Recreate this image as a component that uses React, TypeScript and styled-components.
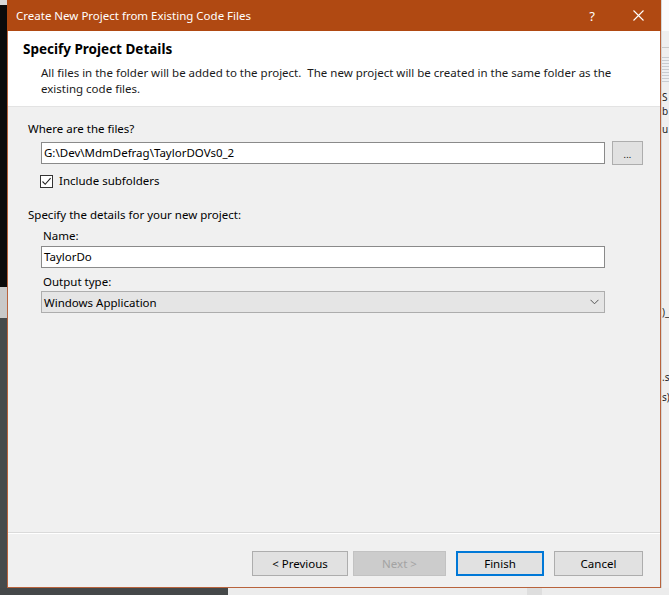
import React from "react";
import styled, { createGlobalStyle } from "styled-components";

const Global = createGlobalStyle`
  html, body { margin: 0; padding: 0; }
  body {
    width: 669px;
    height: 595px;
    overflow: hidden;
    background: #ececec;
    font-family: "Noto Sans", "Open Sans", sans-serif;
    font-size: 11.5px;
    color: #000;
  }
  * { box-sizing: border-box; }
`;

const Screen = styled.div`
  display: grid;
  grid-template-columns: 7px 654px 8px;
  grid-template-rows: 588px 7px;
  width: 669px;
  height: 595px;
  overflow: hidden;
`;

const Strip = styled.div`
  display: flex;
  flex-direction: column;
  overflow: hidden;
`;

const Band = styled.div<{ $h?: number; $bg: string }>`
  flex: ${(p) => (p.$h ? `0 0 ${p.$h}px` : "1 1 auto")};
  background: ${(p) => p.$bg};
`;

const RightStrip = styled.div`
  display: flex;
  flex-direction: column;
  overflow: hidden;
  background: #efefef;
  border-left: 1px solid #d6d6d6;
`;

const RightTop = styled.div`
  flex: 0 0 31px;
  background: #fbfbfb;
`;

const RightRule = styled.div<{ $mt: number }>`
  flex: 0 0 1px;
  margin-top: ${(p) => p.$mt}px;
  background: #c8c8c8;
`;

const RightDots = styled.div<{ $mt: number }>`
  flex: 0 0 25px;
  margin-top: ${(p) => p.$mt}px;
  background: repeating-linear-gradient(
    to bottom,
    #c9ccd0 0px,
    #c9ccd0 1px,
    #eef0f2 1px,
    #eef0f2 3px
  );
`;

const Frag = styled.div<{ $mt: number }>`
  flex: 0 0 12px;
  margin-top: ${(p) => p.$mt}px;
  height: 12px;
  line-height: 12px;
  font-size: 10px;
  color: #1e1e1e;
  white-space: nowrap;
  overflow: hidden;
`;

const BottomStrip = styled.div`
  grid-column: 1 / -1;
  display: flex;
`;

const BottomPart = styled.div<{ $w?: number; $bg: string }>`
  flex: ${(p) => (p.$w ? `0 0 ${p.$w}px` : "1 1 auto")};
  background: ${(p) => p.$bg};
`;

const Dialog = styled.div`
  display: flex;
  flex-direction: column;
  background: #f0f0f0;
  border-left: 1px solid #b8633c;
  border-right: 1px solid #b8633c;
  border-bottom: 1px solid #b8633c;
`;

const TitleBar = styled.div`
  flex: 0 0 31px;
  margin: 0 -1px;
  display: flex;
  align-items: center;
  background: #b04912;
  color: #ffffff;
`;

const TitleText = styled.div`
  flex: 1 1 auto;
  padding-left: 9px;
  font-size: 11.5px;
  padding-bottom: 1px;
`;

const CaptionButton = styled.div`
  flex: 0 0 46px;
  height: 31px;
  display: flex;
  align-items: center;
  justify-content: center;
  color: #ffffff;
  font-size: 13px;
`;

const Header = styled.div`
  flex: 0 0 76px;
  background: #ffffff;
  border-bottom: 1px solid #e3e3e3;
  padding: 9px 0 0 15px;
`;

const HeaderTitle = styled.div`
  font-weight: 700;
  font-size: 13.5px;
  line-height: 18px;
  color: #000;
`;

const HeaderDesc = styled.div`
  margin-top: 7px;
  padding-left: 18px;
  font-size: 11.5px;
  line-height: 16px;
  color: #1a1a1a;
  white-space: pre;
`;

const Body = styled.div`
  flex: 1 1 auto;
  display: flex;
  flex-direction: column;
  padding: 0 17px 0 20px;
`;

const Label = styled.div<{ $indent?: number; $mt: number }>`
  flex: none;
  margin-top: ${(p) => p.$mt}px;
  padding-left: ${(p) => p.$indent ?? 0}px;
  height: 16px;
  line-height: 16px;
  font-size: 11.5px;
  color: #000;
  white-space: nowrap;
`;

const Row = styled.div<{ $mt: number }>`
  flex: none;
  margin-top: ${(p) => p.$mt}px;
  display: flex;
  align-items: center;
  padding-left: 13px;
  gap: 7px;
`;

const TextBox = styled.div`
  flex: 0 0 564px;
  height: 22px;
  background: #ffffff;
  border: 1px solid #8a8a8a;
  padding-left: 2px;
  line-height: 20px;
  font-size: 11.5px;
  color: #000;
  white-space: nowrap;
`;

const Field = styled.div<{ $mt: number }>`
  flex: none;
  margin-top: ${(p) => p.$mt}px;
  margin-left: 13px;
  width: 564px;
  height: 22px;
  background: #ffffff;
  border: 1px solid #8a8a8a;
  padding-left: 2px;
  line-height: 20px;
  font-size: 11.5px;
  color: #000;
  white-space: nowrap;
`;

const Combo = styled.div<{ $mt: number }>`
  flex: none;
  margin-top: ${(p) => p.$mt}px;
  margin-left: 13px;
  width: 564px;
  height: 22px;
  display: flex;
  align-items: center;
  justify-content: space-between;
  background: #e5e5e5;
  border: 1px solid #adadad;
  padding: 0 5px 0 2px;
  font-size: 11.5px;
  color: #000;
`;

const BrowseButton = styled.div`
  flex: 0 0 31px;
  height: 24px;
  display: flex;
  align-items: center;
  justify-content: center;
  padding-top: 3px;
  background: #e1e1e1;
  border: 1px solid #adadad;
  font-size: 9px;
  letter-spacing: 0.3px;
  color: #000;
`;

const CheckRow = styled.div<{ $mt: number }>`
  flex: none;
  margin-top: ${(p) => p.$mt}px;
  display: flex;
  align-items: center;
  padding-left: 12px;
  gap: 6px;
  height: 16px;
`;

const CheckBox = styled.div`
  width: 13px;
  height: 13px;
  border: 1px solid #333333;
  background: #ffffff;
  display: flex;
  align-items: center;
  justify-content: center;
`;

const CheckLabel = styled.span`
  font-size: 11.5px;
  line-height: 16px;
`;

const Footer = styled.div`
  flex: 0 0 55px;
  display: flex;
  justify-content: flex-end;
  align-items: flex-start;
  padding: 18px 17px 0 0;
  border-top: 1px solid #dadada;
  box-shadow: inset 0 1px 0 #ffffff;
`;

const Button = styled.div<{ $w: number; $ml: number; $variant?: "default" | "disabled" | "focus" }>`
  flex: 0 0 ${(p) => p.$w}px;
  margin-left: ${(p) => p.$ml}px;
  height: 25px;
  display: flex;
  align-items: center;
  justify-content: center;
  font-size: 11.5px;
  background: ${(p) => (p.$variant === "disabled" ? "#cccccc" : "#e1e1e1")};
  color: ${(p) => (p.$variant === "disabled" ? "#a3a3a3" : "#000")};
  border: ${(p) =>
    p.$variant === "focus"
      ? "2px solid #0078d7"
      : p.$variant === "disabled"
      ? "1px solid #c2c2c2"
      : "1px solid #adadad"};
`;

const CloseIcon = () => (
  <svg width="11" height="11" viewBox="0 0 11 11">
    <path d="M0.5 0.5 L10.5 10.5 M10.5 0.5 L0.5 10.5" stroke="#ffffff" strokeWidth="1.1" fill="none" />
  </svg>
);

const CheckIcon = () => (
  <svg width="11" height="11" viewBox="0 0 11 11">
    <path d="M1.5 5.5 L4.2 8.3 L9.6 2.2" stroke="#222" strokeWidth="1.1" fill="none" />
  </svg>
);

const Chevron = () => (
  <svg width="9" height="6" viewBox="0 0 9 6">
    <path d="M0.5 0.8 L4.5 4.8 L8.5 0.8" stroke="#555" strokeWidth="1" fill="none" />
  </svg>
);

export default function App() {
  return (
    <>
      <Global />
      <Screen>
        <Strip>
          <Band $h={5} $bg="#d9d9d9" />
          <Band $h={282} $bg="#0b0b0b" />
          <Band $h={31} $bg="#c9c9c9" />
          <Band $bg="#464a4b" />
        </Strip>

        <Dialog>
          <TitleBar>
            <TitleText>Create New Project from Existing Code Files</TitleText>
            <CaptionButton>?</CaptionButton>
            <CaptionButton>
              <CloseIcon />
            </CaptionButton>
          </TitleBar>

          <Header>
            <HeaderTitle>Specify Project Details</HeaderTitle>
            <HeaderDesc>
              {"All files in the folder will be added to the project.  The new project will be created in the same folder as the\nexisting code files."}
            </HeaderDesc>
          </Header>

          <Body>
            <Label $mt={14}>Where are the files?</Label>
            <Row $mt={4}>
              <TextBox>G:\Dev\MdmDefrag\TaylorDOVs0_2</TextBox>
              <BrowseButton>...</BrowseButton>
            </Row>
            <CheckRow $mt={8}>
              <CheckBox>
                <CheckIcon />
              </CheckBox>
              <CheckLabel>Include subfolders</CheckLabel>
            </CheckRow>
            <Label $mt={18}>Specify the details for your new project:</Label>
            <Label $mt={5} $indent={15}>Name:</Label>
            <Field $mt={2}>TaylorDo</Field>
            <Label $mt={6} $indent={15}>Output type:</Label>
            <Combo $mt={1}>
              <span>Windows Application</span>
              <Chevron />
            </Combo>
          </Body>

          <Footer>
            <Button $w={96} $ml={0}>&lt; Previous</Button>
            <Button $w={93} $ml={5} $variant="disabled">Next &gt;</Button>
            <Button $w={88} $ml={10} $variant="focus">Finish</Button>
            <Button $w={89} $ml={10}>Cancel</Button>
          </Footer>
        </Dialog>

        <RightStrip>
          <RightTop />
          <RightRule $mt={16} />
          <RightDots $mt={9} />
          <Frag $mt={9}>S</Frag>
          <Frag $mt={2}>b</Frag>
          <Frag $mt={6}>u</Frag>
          <Frag $mt={171}>)_</Frag>
          <Frag $mt={53}>.s</Frag>
          <Frag $mt={8}>s)</Frag>
        </RightStrip>

        <BottomStrip>
          <BottomPart $w={228} $bg="#454849" />
          <BottomPart $w={299} $bg="#ececec" />
          <BottomPart $w={15} $bg="#dedede" />
          <BottomPart $bg="#ececec" />
        </BottomStrip>
      </Screen>
    </>
  );
}
